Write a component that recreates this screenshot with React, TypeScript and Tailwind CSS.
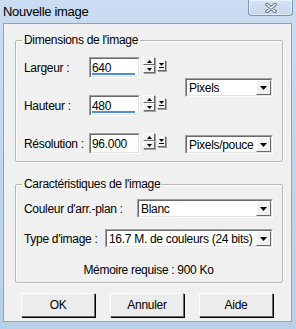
import React from "react";

const ui = "font-['Liberation_Sans',Arial,sans-serif] text-[12px] leading-[14px] tracking-[-0.3px] text-black whitespace-nowrap";

const DownTri = ({ w = 7, h = 4 }: { w?: number; h?: number }) => (
  <svg width={w} height={h} viewBox={`0 0 ${w} ${h}`}>
    <polygon points={`0,0 ${w},0 ${w / 2},${h}`} fill="#000" />
  </svg>
);

const UpTri = () => (
  <svg width="5" height="3" viewBox="0 0 5 3">
    <polygon points="0,3 5,3 2.5,0" fill="#000" />
  </svg>
);

const Raised = ({ className, children }: { className: string; children?: React.ReactNode }) => (
  <div
    className={`flex items-center justify-center bg-[#f0f0f0] border border-t-white border-l-white border-b-[#696969] border-r-[#696969] shadow-[1px_1px_0_#a0a0a0] ${className}`}
  >
    {children}
  </div>
);

const Sunken = ({ className, children }: { className: string; children?: React.ReactNode }) => (
  <div className={`border border-t-[#a0a0a0] border-l-[#a0a0a0] border-b-white border-r-white ${className}`}>
    <div className="relative h-full w-full overflow-hidden bg-white border border-t-[#696969] border-l-[#696969] border-b-[#e3e3e3] border-r-[#e3e3e3]">
      {children}
    </div>
  </div>
);

const NumField = ({ label, value, bar }: { label: string; value: string; bar?: boolean }) => (
  <div className="flex items-center h-[21px]">
    <span className="w-[65px] shrink-0">{label}</span>
    <Sunken className="w-[51px] h-[21px] shrink-0">
      <span className="absolute left-[1px] top-[2px]">{value}</span>
      {bar && <div className="absolute left-[1px] right-[3px] bottom-[1px] h-[2px] bg-[#4a90d9]" />}
    </Sunken>
    <div className="ml-[3px] flex flex-col self-start w-[12px] shrink-0">
      <Raised className="h-[8px]">
        <UpTri />
      </Raised>
      <Raised className="h-[8px]">
        <DownTri w={5} h={3} />
      </Raised>
    </div>
    <Raised className="ml-[2px] mt-[-4px] w-[9px] h-[11px] flex-col gap-[1px] shrink-0">
      <DownTri w={5} h={3} />
      <div className="w-[5px] h-[1px] bg-black" />
    </Raised>
  </div>
);

const Combo = ({ text, className }: { text: string; className: string }) => (
  <Sunken className={`h-[19px] shrink-0 ${className}`}>
    <span className="absolute left-[2px] top-[1px]">{text}</span>
    <Raised className="absolute right-0 top-0 w-[15px] h-[15px]">
      <DownTri />
    </Raised>
  </Sunken>
);

const Button = ({ text }: { text: string }) => (
  <button className="w-[74px] h-[24px] flex items-center justify-center bg-[#ececec] border border-t-white border-l-white border-b-[#696969] border-r-[#696969] shadow-[1px_1px_0_#000]">
    {text}
  </button>
);

export default function App() {
  return (
    <div className="w-[296px] h-[329px] flex flex-col bg-gradient-to-b from-[#c9dcf1] to-[#b9d0ea] overflow-hidden">
      <div className="h-[23px] flex justify-between pl-[3px] pr-[3px]">
        <span className="mt-[5px] font-['Liberation_Sans',Arial,sans-serif] text-[13px] leading-[14px] tracking-[-0.3px] text-black">
          Nouvelle image
        </span>
        <div className="w-[45px] h-[16px] rounded-b-[4px] border border-t-0 border-[#7d94b3] bg-gradient-to-b from-[#d4e3f4] to-[#c4d7ee] shadow-[inset_0_0_0_1px_rgba(255,255,255,0.5)] flex items-center justify-center">
          <svg width="12" height="10" viewBox="0 0 12 10">
            <path d="M2 1.5 L10 8.5 M10 1.5 L2 8.5" stroke="#5b6b80" strokeWidth="3.4" strokeLinecap="round" />
            <path d="M2 1.5 L10 8.5 M10 1.5 L2 8.5" stroke="#ffffff" strokeWidth="1.6" strokeLinecap="round" />
          </svg>
        </div>
      </div>

      <div className={`ml-[3px] mr-[4px] mb-[7px] flex-1 bg-[#f0f0f0] border border-[#8da3bf] flex flex-col pl-[11px] pr-[8px] pt-[9px] ${ui}`}>
        <fieldset className="m-0 p-0 pl-[8px] pr-[9px] pb-[7px] border border-[#b5b5b5] rounded-[2px] shadow-[inset_1px_1px_0_white,1px_1px_0_white]">
          <legend className="-ml-[2px] px-[2px]">Dimensions de l'image</legend>
          <div className="flex justify-between mt-[10px]">
            <div className="flex flex-col gap-[17px]">
              <NumField label="Largeur :" value="640" bar />
              <NumField label="Hauteur :" value="480" bar />
              <NumField label="Résolution :" value="96.000" />
            </div>
            <div className="flex flex-col">
              <Combo text="Pixels" className="w-[88px] mt-[21px]" />
              <Combo text="Pixels/pouce" className="w-[88px] mt-[38px]" />
            </div>
          </div>
        </fieldset>

        <fieldset className="m-0 mt-[15px] p-0 pl-[8px] pr-[9px] pb-[5px] border border-[#b5b5b5] rounded-[2px] shadow-[inset_1px_1px_0_white,1px_1px_0_white]">
          <legend className="-ml-[2px] px-[2px]">Caractéristiques de l'image</legend>
          <div className="flex items-center justify-between mt-[8px]">
            <span>Couleur d'arr.-plan :</span>
            <Combo text="Blanc" className="w-[136px]" />
          </div>
          <div className="flex items-center justify-between mt-[11px]">
            <span>Type d'image :</span>
            <Combo text="16.7 M. de couleurs (24 bits)" className="w-[168px]" />
          </div>
          <div className="mt-[15px] text-center">Mémoire requise : 900 Ko</div>
        </fieldset>

        <div className="mt-[10px] pl-[6px] flex gap-[15px]">
          <Button text="OK" />
          <Button text="Annuler" />
          <Button text="Aide" />
        </div>
      </div>
    </div>
  );
}
